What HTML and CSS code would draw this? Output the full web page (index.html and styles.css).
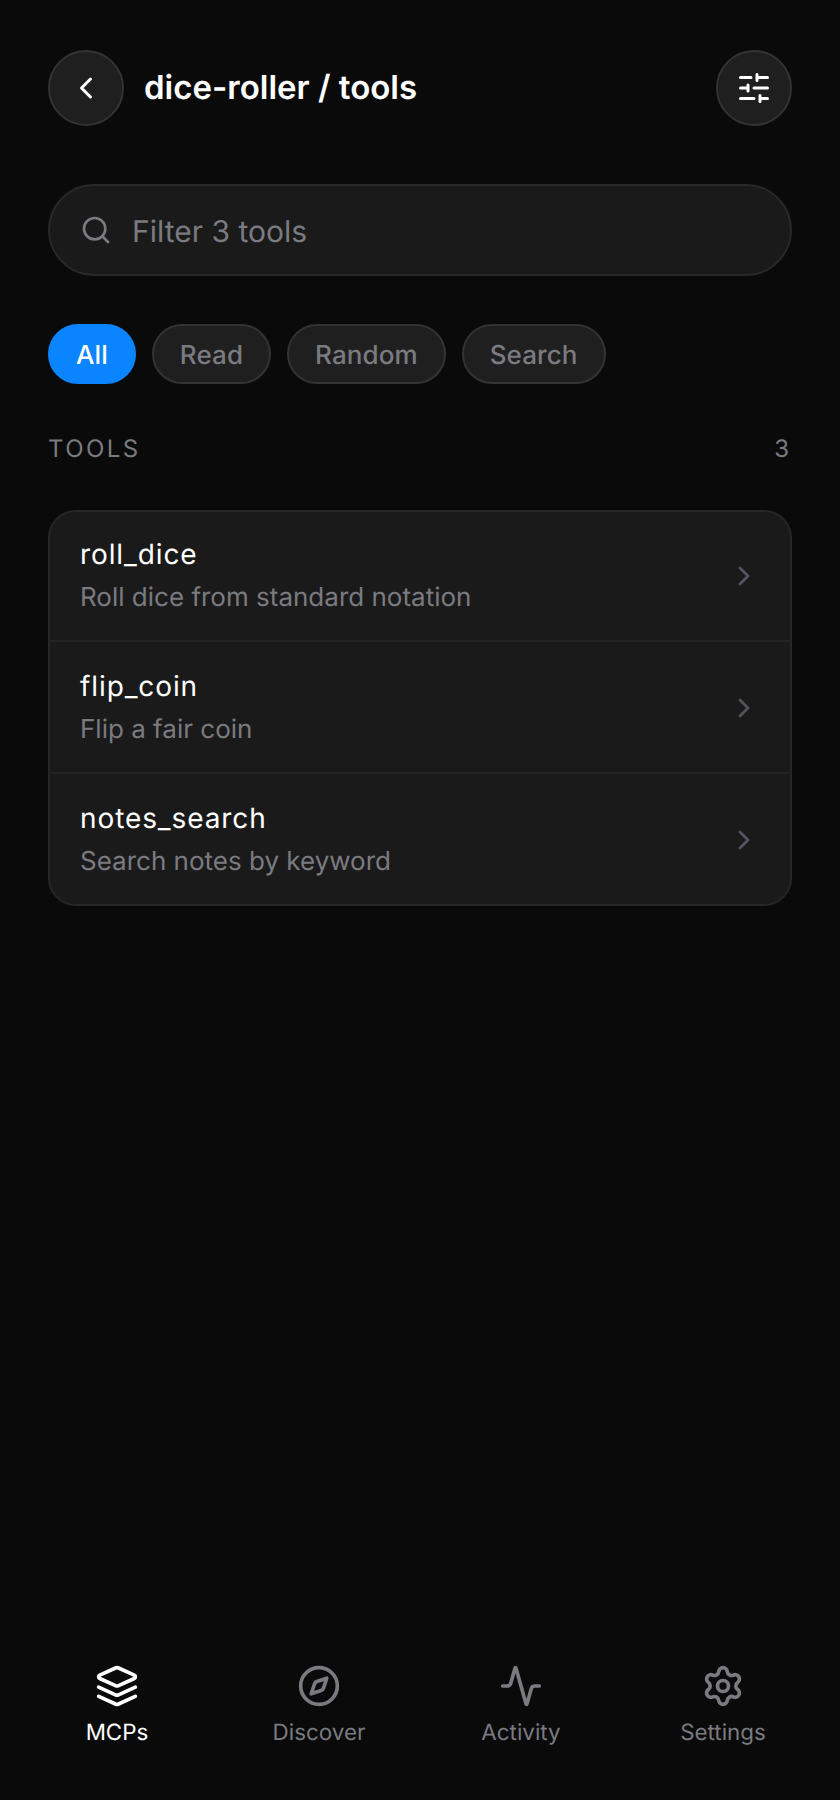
FILE: index.html
```html
<!DOCTYPE html>
<html>
<head>
    <title>dice-roller / tools</title>
    <link rel="stylesheet" href="styles.css">
</head>
<body>
    <div class="page">
        <header class="header">
            <button class="round-btn">
                <svg class="icon-36" viewBox="0 0 24 24"><path d="m15 18-6-6 6-6"/></svg>
            </button>
            <h1 class="title">dice-roller / tools</h1>
            <button class="round-btn">
                <svg class="icon-36" viewBox="0 0 24 24">
                    <path d="M21 5h-7M10 5H3M21 12h-9M8 12H3M21 19h-5M12 19H3M14 3v4M8 10v4M16 17v4"/>
                </svg>
            </button>
        </header>

        <div class="search">
            <svg class="search-icon" viewBox="0 0 24 24"><circle cx="11" cy="11" r="8"/><path d="m21 21-4.3-4.3"/></svg>
            <input class="search-input" type="text" placeholder="Filter 3 tools">
        </div>

        <div class="chips">
            <button class="chip chip-active">All</button>
            <button class="chip">Read</button>
            <button class="chip">Random</button>
            <button class="chip">Search</button>
        </div>

        <div class="section-head">
            <span class="section-label">TOOLS</span>
            <span class="section-count">3</span>
        </div>

        <div class="tool-list">
            <div class="tool-row">
                <div class="tool-text">
                    <div class="tool-name">roll_dice</div>
                    <div class="tool-desc">Roll dice from standard notation</div>
                </div>
                <svg class="chevron" viewBox="0 0 24 24"><path d="m9 18 6-6-6-6"/></svg>
            </div>
            <div class="tool-row">
                <div class="tool-text">
                    <div class="tool-name">flip_coin</div>
                    <div class="tool-desc">Flip a fair coin</div>
                </div>
                <svg class="chevron" viewBox="0 0 24 24"><path d="m9 18 6-6-6-6"/></svg>
            </div>
            <div class="tool-row">
                <div class="tool-text">
                    <div class="tool-name">notes_search</div>
                    <div class="tool-desc">Search notes by keyword</div>
                </div>
                <svg class="chevron" viewBox="0 0 24 24"><path d="m9 18 6-6-6-6"/></svg>
            </div>
        </div>

        <nav class="tabbar">
            <div class="tab tab-active">
                <svg class="tab-icon" viewBox="0 0 24 24">
                    <path d="m12.83 2.18a2 2 0 0 0-1.66 0L2.6 6.08a1 1 0 0 0 0 1.83l8.58 3.91a2 2 0 0 0 1.66 0l8.58-3.9a1 1 0 0 0 0-1.83Z"/>
                    <path d="m22 17.65-9.17 4.16a2 2 0 0 1-1.66 0L2 17.65"/>
                    <path d="m22 12.65-9.17 4.16a2 2 0 0 1-1.66 0L2 12.65"/>
                </svg>
                <span>MCPs</span>
            </div>
            <div class="tab">
                <svg class="tab-icon" viewBox="0 0 24 24">
                    <circle cx="12" cy="12" r="10"/>
                    <path d="m16.24 7.76-1.804 5.411a2 2 0 0 1-1.265 1.265L7.76 16.24l1.804-5.411a2 2 0 0 1 1.265-1.265z"/>
                </svg>
                <span>Discover</span>
            </div>
            <div class="tab">
                <svg class="tab-icon" viewBox="0 0 24 24">
                    <path d="M22 12h-2.48a2 2 0 0 0-1.93 1.46l-2.35 8.36a.25.25 0 0 1-.48 0L9.24 2.18a.25.25 0 0 0-.48 0l-2.35 8.36A2 2 0 0 1 4.49 12H2"/>
                </svg>
                <span>Activity</span>
            </div>
            <div class="tab">
                <svg class="tab-icon" viewBox="0 0 24 24">
                    <path d="M9.671 4.136a2.34 2.34 0 0 1 4.659 0 2.34 2.34 0 0 0 3.319 1.915 2.34 2.34 0 0 1 2.33 4.033 2.34 2.34 0 0 0 0 3.831 2.34 2.34 0 0 1-2.33 4.033 2.34 2.34 0 0 0-3.319 1.915 2.34 2.34 0 0 1-4.659 0 2.34 2.34 0 0 0-3.32-1.915 2.34 2.34 0 0 1-2.33-4.033 2.34 2.34 0 0 0 0-3.831A2.34 2.34 0 0 1 6.35 6.051a2.34 2.34 0 0 0 3.319-1.915"/>
                    <circle cx="12" cy="12" r="3"/>
                </svg>
                <span>Settings</span>
            </div>
        </nav>
    </div>
</body>
</html>
```

FILE: styles.css
```css
* {
    box-sizing: border-box;
}
body {
    margin: 0;
    background: #0a0a0a;
    font-family: Inter, "Liberation Sans", sans-serif;
    color: #fff;
    text-rendering: geometricPrecision;
}
svg {
    fill: none;
    stroke: currentColor;
    stroke-width: 2;
    stroke-linecap: round;
    stroke-linejoin: round;
    flex-shrink: 0;
}
button {
    font-family: inherit;
    text-rendering: inherit;
    padding: 0;
}
.page {
    height: 1800px;
    padding: 50px 48px 0;
    display: flex;
    flex-direction: column;
}
.header {
    display: flex;
    align-items: center;
    gap: 20px;
}
.round-btn {
    width: 76px;
    height: 76px;
    border-radius: 50%;
    border: 2px solid #333;
    background: #1f1f1f;
    color: #fff;
    display: flex;
    align-items: center;
    justify-content: center;
}
.icon-36 {
    width: 36px;
    height: 36px;
}
.title {
    flex: 1;
    margin: 0 0 2px;
    font-size: 33px;
    font-weight: 600;
    line-height: 40px;
}
.search {
    margin-top: 58px;
    height: 92px;
    border-radius: 46px;
    border: 2px solid #282828;
    background: #1a1a1a;
    display: flex;
    align-items: center;
    gap: 20px;
    padding: 0 30px;
}
.search-icon {
    width: 32px;
    height: 32px;
    color: #7a7b80;
}
.search-input {
    flex: 1;
    border: 0;
    outline: 0;
    background: transparent;
    color: #fff;
    font-family: inherit;
    text-rendering: inherit;
    font-size: 30px;
    padding: 3px 0 0;
}
.search-input::placeholder {
    color: #7a7b80;
    opacity: 1;
}
.chips {
    margin-top: 48px;
    display: flex;
    gap: 16px;
}
.chip {
    height: 60px;
    padding: 2px 26px 0;
    border-radius: 30px;
    border: 2px solid #333;
    background: #1f1f1f;
    color: #7a7b80;
    font-size: 26px;
    font-weight: 500;
    letter-spacing: 0.1px;
}
.chip-active {
    background: #0a84ff;
    border-color: #0a84ff;
    color: #fff;
}
.section-head {
    margin-top: 50px;
    padding: 0 3px 0 0;
    display: flex;
    justify-content: space-between;
    align-items: center;
    font-size: 24px;
    line-height: 30px;
    color: #7a7b80;
}
.section-label {
    letter-spacing: 2.4px;
}
.tool-list {
    margin-top: 46px;
    border: 2px solid #272727;
    border-radius: 28px;
    background: #1a1a1a;
}
.tool-row {
    height: 128px;
    padding: 0 30px;
    display: flex;
    align-items: center;
    justify-content: space-between;
}
.tool-row + .tool-row {
    height: 132px;
    padding-top: 2px;
    border-top: 2px solid #242424;
}
.tool-text {
    padding-bottom: 3px;
}
.tool-name {
    font-size: 28px;
    line-height: 36px;
    letter-spacing: 0.9px;
}
.tool-desc {
    margin-top: 10px;
    font-size: 26px;
    line-height: 32px;
    color: #7a7b80;
}
.chevron {
    width: 32px;
    height: 32px;
    color: #52555b;
}
.tabbar {
    margin: auto -32px 0;
    padding-bottom: 53px;
    display: grid;
    grid-template-columns: repeat(4, 1fr);
}
.tab {
    display: flex;
    flex-direction: column;
    align-items: center;
    gap: 11px;
    color: #7a7b80;
    font-size: 22.4px;
    line-height: 28px;
}
.tab-active {
    color: #fff;
}
.tab-icon {
    width: 44px;
    height: 44px;
}
```
